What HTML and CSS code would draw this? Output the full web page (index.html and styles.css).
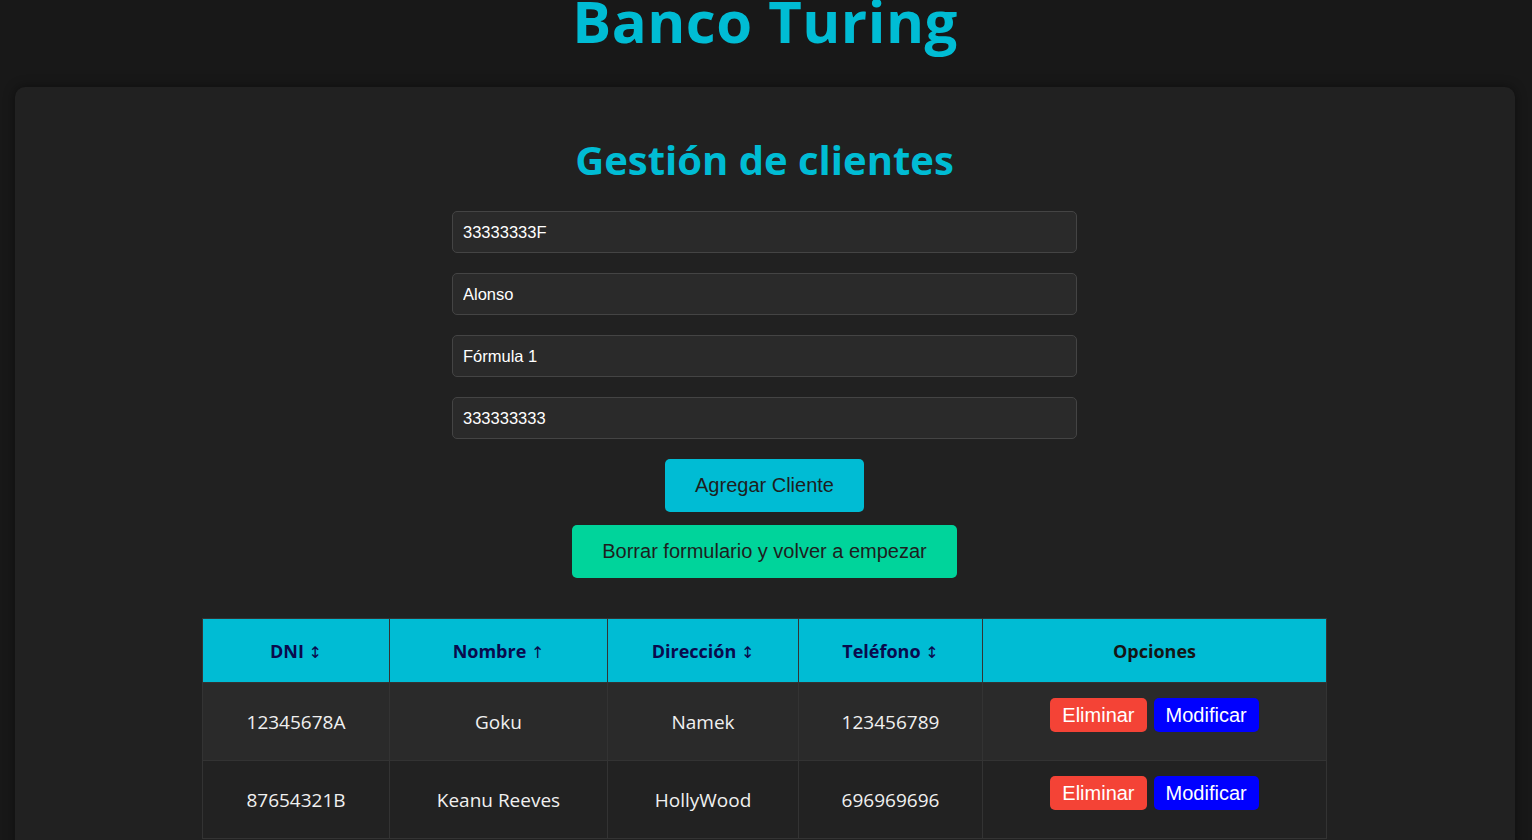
FILE: index.html
```html
<!DOCTYPE html>
<html lang="es">
<head>
<meta charset="utf-8">
<title>Banco Turing</title>
<link rel="stylesheet" href="styles.css">
</head>
<body>
<header class="top">
  <h1 class="brand">Banco Turing</h1>
</header>
<main class="panel">
  <h2 class="title">Gestión de clientes</h2>
  <form class="client-form">
    <input class="field" type="text" value="33333333F">
    <input class="field" type="text" value="Alonso">
    <input class="field" type="text" value="Fórmula 1">
    <input class="field" type="text" value="333333333">
    <button type="button" class="btn btn-add">Agregar Cliente</button>
    <button type="button" class="btn btn-reset">Borrar formulario y volver a empezar</button>
  </form>
  <table class="clients">
    <thead>
      <tr>
        <th class="col-dni">DNI <span class="sort">↕</span></th>
        <th class="col-name">Nombre <span class="sort">↑</span></th>
        <th class="col-addr">Dirección <span class="sort">↕</span></th>
        <th class="col-tel">Teléfono <span class="sort">↕</span></th>
        <th class="col-opt plain">Opciones</th>
      </tr>
    </thead>
    <tbody>
      <tr>
        <td>12345678A</td>
        <td>Goku</td>
        <td>Namek</td>
        <td>123456789</td>
        <td class="opts"><button class="mini del">Eliminar</button><button class="mini mod">Modificar</button></td>
      </tr>
      <tr>
        <td>87654321B</td>
        <td>Keanu Reeves</td>
        <td>HollyWood</td>
        <td>696969696</td>
        <td class="opts"><button class="mini del">Eliminar</button><button class="mini mod">Modificar</button></td>
      </tr>
    </tbody>
  </table>
</main>
</body>
</html>
```
FILE: styles.css
```css
html, body {
  margin: 0;
  padding: 0;
}
body {
  background: #181818;
  font-family: "Open Sans", "Noto Sans", sans-serif;
  color: #eeeeee;
  padding: 0 17px 0 15px;
  overflow: hidden;
  height: 840px;
}
.top {
  display: flow-root;
  height: 87px;
}
.brand {
  margin: -19px 0 0;
  text-align: center;
  color: #00bcd4;
  font-size: 58px;
  font-weight: 700;
  line-height: 80px;
  letter-spacing: 0.5px;
}
.panel {
  background: #212121;
  border-radius: 10px;
  box-shadow: 0 0 12px rgba(0, 0, 0, 0.45);
  padding: 45px 1px 40px 0;
}
.title {
  margin: 0;
  text-align: center;
  color: #00bcd4;
  font-size: 40px;
  font-weight: 700;
  line-height: 56px;
}
.client-form {
  display: flex;
  flex-direction: column;
  align-items: center;
  width: 625px;
  margin: 23px auto 0;
}
.field {
  box-sizing: border-box;
  width: 625px;
  height: 42px;
  margin: 0 0 20px;
  padding: 0 10px;
  background: #2a2a2a;
  border: 1px solid #444444;
  border-radius: 5px;
  color: #ffffff;
  font-family: "Liberation Sans", Arial, sans-serif;
  font-size: 16.5px;
}
.btn {
  height: 53px;
  border: none;
  border-radius: 5px;
  padding: 0;
  color: #1e1e1e;
  font-family: "Liberation Sans", Arial, sans-serif;
  font-size: 20px;
}
.btn-add {
  background: #00bcd4;
  width: 199px;
}
.btn-reset {
  background: #00d49b;
  width: 385px;
  margin-top: 13px;
}
.clients {
  width: 1125px;
  margin: 40px auto 0;
  border-collapse: collapse;
}
.clients th,
.clients td {
  border: 1px solid #333333;
  text-align: center;
  padding: 0;
}
.clients th {
  background: #00bcd4;
  color: #0a0a4d;
  font-size: 18px;
  font-weight: 700;
  height: 63px;
}
.clients th.plain {
  color: #151515;
}
.sort {
  font-weight: 400;
  font-family: "DejaVu Sans", sans-serif;
  font-size: 16px;
}
.col-dni { width: 186px; }
.col-name { width: 217px; }
.col-addr { width: 190px; }
.col-tel { width: 183px; }
.clients tbody tr {
  height: 78px;
}
.clients td {
  font-size: 19px;
  color: #f0f0f0;
}
.clients tbody tr:nth-child(odd) td { background: #2a2a2a; }
.clients tbody tr:nth-child(even) td { background: #222222; }
.clients td.opts {
  vertical-align: top;
  padding-top: 15px;
}
.mini {
  height: 34px;
  border: none;
  border-radius: 5px;
  color: #ffffff;
  font-family: "Liberation Sans", Arial, sans-serif;
  font-size: 20px;
  padding: 0 12px;
  margin: 0 3.5px;
}
.del { background: #f44336; }
.mod { background: #0000ff; }
```
